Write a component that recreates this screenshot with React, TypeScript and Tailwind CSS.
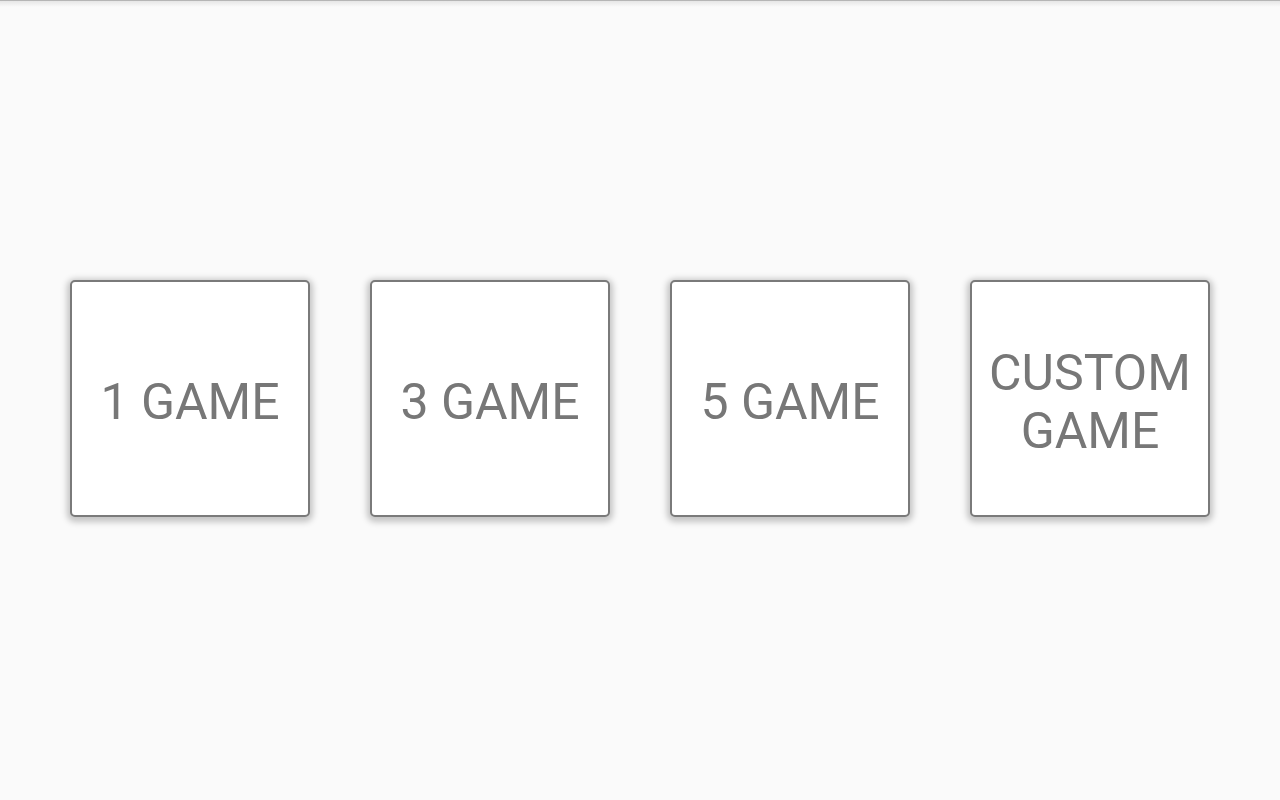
import React from "react";

const items = [["1 GAME"], ["3 GAME"], ["5 GAME"], ["CUSTOM", "GAME"]];

export default function App() {
  return (
    <div className="relative w-[1280px] h-[800px] bg-[#fafafa] flex items-center justify-center overflow-hidden" style={{ fontFamily: "Roboto, 'Liberation Sans', sans-serif" }}>
      <div className="absolute top-0 left-0 right-0 h-[1px] bg-[#b5b5b5]" />
      <div className="absolute top-[1px] left-0 right-0 h-[6px] bg-gradient-to-b from-[#e6e6e6] to-[#fafafa]" />
      <div className="flex gap-[60px] mt-[-3px]">
        {items.map((lines, i) => (
          <div
            key={i}
            className="w-[240px] h-[237px] pt-[6px] bg-white border-2 border-[#7a7a7a] rounded-[5px] flex flex-col items-center justify-center text-[#777777] text-[50px] leading-[58px] shadow-[0_2px_6px_3px_rgba(0,0,0,0.22)]"
          >
            {lines.map((l, j) => (
              <span key={j} className="block">{l}</span>
            ))}
          </div>
        ))}
      </div>
    </div>
  );
}
